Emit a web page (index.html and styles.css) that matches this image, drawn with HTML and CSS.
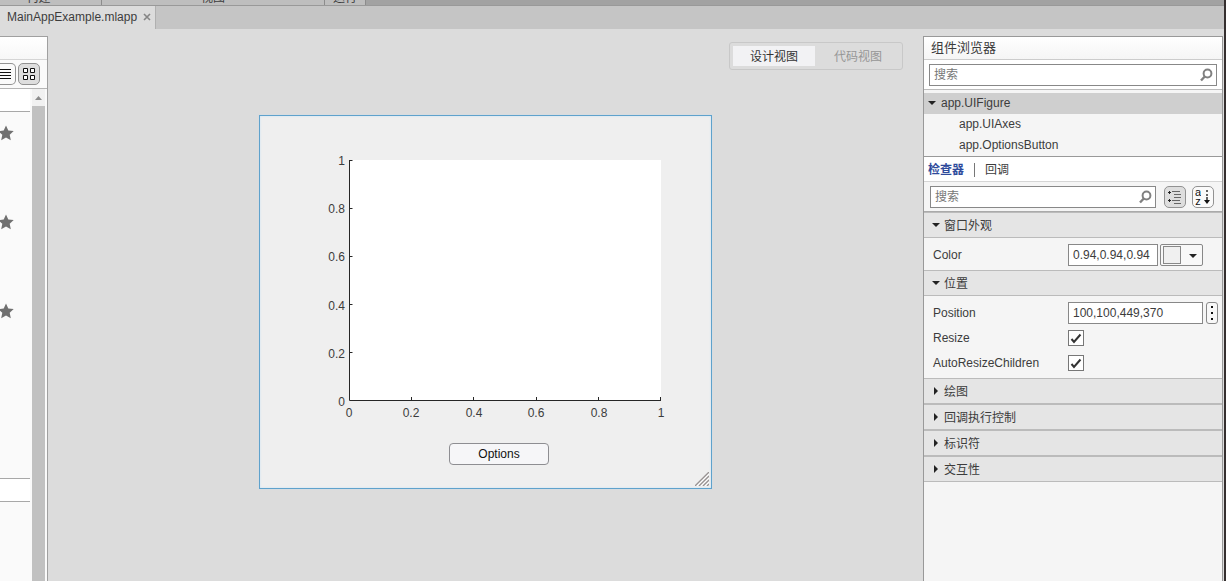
FILE: index.html
```html
<!DOCTYPE html>
<html lang="zh-CN">
<head>
<meta charset="utf-8">
<title>MainAppExample.mlapp</title>
<link rel="stylesheet" href="styles.css">
</head>
<body>
<div class="ribbon">
  <span class="group group-build">构建</span>
  <span class="group group-view">视图</span>
  <span class="group group-run">运行</span>
  <span class="ribbon-rest"></span>
</div>
<nav class="tabs">
  <div class="tab"><span>MainAppExample.mlapp</span>
    <button class="close" aria-label="关闭"><svg width="8" height="8" viewBox="0 0 8 8"><path d="M1 1l6 6M7 1L1 7" stroke="#858585" stroke-width="1.6"/></svg></button>
  </div>
</nav>
<main class="workspace">
  <aside class="library">
    <div class="library-head"></div>
    <div class="library-tools">
      <button class="tool tool-cut" aria-label="列表"><svg width="11" height="12" viewBox="0 0 11 12"><path d="M0 1.500h11M0 4.500h11M0 7.500h11M0 10.500h11" stroke="#111"/></svg></button>
      <button class="tool pressed" aria-label="网格"><svg width="12" height="12" viewBox="0 0 12 12"><path d="M.5.5h4v4h-4zM7.500.5h4v4h-4zM.5 7.500h4v4h-4zM7.500 7.500h4v4h-4z" fill="#fff" stroke="#111"/></svg></button>
    </div>
    <div class="library-body">
      <div class="library-list">
        <div class="category"></div>
        <div class="items">
          <svg class="star" viewBox="0 0 16 16"><path d="M8 .5l2.300 5 5.400.6-4 3.700 1.100 5.500L8 12.600l-4.800 2.700 1.100-5.500-4-3.700 5.400-.6z"/></svg>
          <svg class="star" viewBox="0 0 16 16"><path d="M8 .5l2.300 5 5.400.6-4 3.700 1.100 5.500L8 12.600l-4.800 2.700 1.100-5.500-4-3.700 5.400-.6z"/></svg>
          <svg class="star" viewBox="0 0 16 16"><path d="M8 .5l2.300 5 5.400.6-4 3.700 1.100 5.500L8 12.600l-4.800 2.700 1.100-5.500-4-3.700 5.400-.6z"/></svg>
        </div>
        <div class="category"></div>
      </div>
      <div class="scrollbar">
        <svg width="13" height="17" viewBox="0 0 13 17"><path d="M3 11l3.500-4 3.500 4z" fill="#8c8c8c"/></svg>
        <div class="thumb"></div>
      </div>
    </div>
  </aside>

  <section class="canvas">
    <div class="switch">
      <button class="view active">设计视图</button>
      <button class="view">代码视图</button>
    </div>
    <div class="figure">
      <svg class="axes" width="451" height="327" viewBox="0 0 451 327">
        <path d="M90 44h311v240H90z" fill="#fff"/>
        <path d="M89.500 44v240.500H401M89.500 44.500h3M89.500 92.500h3M89.500 140.500h3M89.500 188.500h3M89.500 236.500h3M151.500 284v-3M213.500 284v-3M276.500 284v-3M338.500 284v-3M400.500 284v-3" fill="none" stroke="#262626"/>
        <g text-anchor="end">
          <text x="85" y="49">1</text><text x="85" y="97">0.8</text><text x="85" y="145">0.6</text><text x="85" y="194">0.4</text><text x="85" y="242">0.2</text><text x="85" y="290">0</text>
        </g>
        <g text-anchor="middle">
          <text x="89" y="301">0</text><text x="151" y="301">0.2</text><text x="214" y="301">0.4</text><text x="276" y="301">0.6</text><text x="339" y="301">0.8</text><text x="401" y="301">1</text>
        </g>
      </svg>
      <button class="options">Options</button>
      <svg class="grip" width="14" height="14" viewBox="0 0 14 14"><path d="M0 14L14 0M4 14L14 4M8 14l6-6M12 14l2-2" stroke="#989292" stroke-width="1.300"/><path d="M2 14L14 2M6 14l8-8M10 14l4-4" stroke="#fff"/></svg>
    </div>
  </section>

  <aside class="inspector">
    <h2 class="title">组件浏览器</h2>
    <div class="search-row">
      <label class="search"><input type="text" placeholder="搜索" aria-label="搜索组件"><svg width="14" height="14" viewBox="0 0 14 14"><circle cx="8.500" cy="5.500" r="3.900" fill="none" stroke="#808080" stroke-width="2"/><path d="M5.800 8.500L2 12.500" stroke="#808080" stroke-width="2.400"/></svg></label>
    </div>
    <ul class="tree">
      <li class="node selected"><svg class="arrow" viewBox="0 0 8 8"><path d="M0 2h8L4 6z"/></svg>app.UIFigure</li>
      <li class="node child">app.UIAxes</li>
      <li class="node child">app.OptionsButton</li>
    </ul>
    <div class="inspector-tabs">
      <button class="itab current">检查器</button>
      <button class="itab">回调</button>
    </div>
    <div class="filter">
      <label class="search"><input type="text" placeholder="搜索" aria-label="搜索属性"><svg width="14" height="14" viewBox="0 0 14 14"><circle cx="8.500" cy="5.500" r="3.900" fill="none" stroke="#808080" stroke-width="2"/><path d="M5.800 8.500L2 12.500" stroke="#808080" stroke-width="2.400"/></svg></label>
      <button class="tool pressed" aria-label="按类别分组"><svg width="16" height="16" viewBox="0 0 16 16"><path d="M1 3.500h3M2.500 2v3M1 11.500h3M2.500 10v3" stroke="#222"/><path d="M5 2.500h8M7 5.500h7M7 8.500h7M5 11.500h8M7 14.500h7" stroke="#666"/></svg></button>
      <button class="tool sort" aria-label="按字母排序"><span class="az"><span>a</span><span>z</span></span><svg width="8" height="16" viewBox="0 0 8 16"><path d="M4 1v2M4 5v2M4 8v4" stroke="#222" stroke-width="1.400"/><path d="M1 11h6l-3 4z" fill="#111"/></svg></button>
    </div>

    <button class="section"><svg class="arrow" viewBox="0 0 8 8"><path d="M0 2h8L4 6z"/></svg><span>窗口外观</span></button>
    <div class="props">
      <div class="prop"><label for="color">Color</label>
        <input class="field color" id="color" type="text" value="0.94,0.94,0.94">
        <button class="swatch" aria-label="选择颜色"><span class="chip"></span><svg class="arrow" viewBox="0 0 8 8"><path d="M0 3h8L4 7z"/></svg></button>
      </div>
    </div>
    <button class="section"><svg class="arrow" viewBox="0 0 8 8"><path d="M0 2h8L4 6z"/></svg><span>位置</span></button>
    <div class="props">
      <div class="prop"><label for="position">Position</label>
        <input class="field position" id="position" type="text" value="100,100,449,370">
        <button class="more" aria-label="更多"><svg width="4" height="16" viewBox="0 0 4 16"><path d="M1 1h2v2H1zM1 7h2v2H1zM1 13h2v2H1z" fill="#111"/></svg></button>
      </div>
      <div class="prop"><label for="resize">Resize</label><span class="check"><input id="resize" type="checkbox" checked><svg viewBox="0 0 16 16"><path d="M3.500 9l2.500 3L12.500 4.500" fill="none" stroke="#333" stroke-width="2"/></svg></span></div>
      <div class="prop"><label for="auto">AutoResizeChildren</label><span class="check"><input id="auto" type="checkbox" checked><svg viewBox="0 0 16 16"><path d="M3.500 9l2.500 3L12.500 4.500" fill="none" stroke="#333" stroke-width="2"/></svg></span></div>
    </div>
    <button class="section"><svg class="arrow" viewBox="0 0 8 8"><path d="M2 0v8l4-4z"/></svg><span>绘图</span></button>
    <button class="section"><svg class="arrow" viewBox="0 0 8 8"><path d="M2 0v8l4-4z"/></svg><span>回调执行控制</span></button>
    <button class="section"><svg class="arrow" viewBox="0 0 8 8"><path d="M2 0v8l4-4z"/></svg><span>标识符</span></button>
    <button class="section"><svg class="arrow" viewBox="0 0 8 8"><path d="M2 0v8l4-4z"/></svg><span>交互性</span></button>
  </aside>
</main>
</body>
</html>
```
FILE: styles.css
```css
* { box-sizing: border-box; }
body {
  margin: 0;
  height: 100vh;
  display: flex;
  flex-direction: column;
  overflow: hidden;
  background: #dcdcdc;
  border-right: 2px solid #352f2f;
  color: #3c3c3c;
}
body, button, input { font-family: "Liberation Sans", "Noto Sans CJK SC", sans-serif; font-size: 12px; }
button { padding: 0; border: 0; background: none; color: inherit; }
svg { display: block; flex: none; }

.ribbon { flex: none; height: 6px; display: flex; align-items: flex-end; overflow: hidden; background: #bebebe; border-bottom: 1px solid #999; }
.group { flex: none; height: 16px; line-height: 18px; text-align: center; border-right: 1px solid #8c8c8c; }
.group-build { width: 102px; padding-right: 24px; }
.group-view { width: 223px; }
.group-run { width: 41px; }
.ribbon-rest { flex: 1; height: 5px; background: #a2a2a2; }

.tabs { flex: none; height: 23px; display: flex; background: #c5c5c5; }
.tab { display: flex; align-items: center; gap: 6px; padding: 0 4px 2px 7px; background: #dcdcdc; border-right: 1px solid #b0b0b0; }

.workspace { flex: 1; min-height: 0; display: flex; }

.library { width: 48px; margin-top: 7px; display: flex; flex-direction: column; background: #fafafa; border: 1px solid #a0a0a0; border-width: 1px 1px 0 0; }
.library-head { height: 23px; background: linear-gradient(#fff, #f7f7f7); border-bottom: 1px solid #d5d5d5; }
.library-tools { height: 29px; display: flex; align-items: center; gap: 2px; border-bottom: 1px solid #b5b5b5; }
.tool { width: 22px; height: 22px; display: flex; align-items: center; justify-content: center; background: #fafafa; border: 1px solid #929292; border-radius: 5px; }
.tool.pressed { background: #dedede; }
.tool-cut { width: 16px; border-left: 0; border-radius: 0 5px 5px 0; justify-content: flex-start; }
.library-body { flex: 1; display: flex; gap: 2px; }
.library-list { width: 30px; }
.category { height: 23px; background: #fff; border-bottom: 1px solid #a8a8a8; }
.items { height: 367px; display: flex; flex-direction: column; gap: 73px; padding-top: 13px; border-bottom: 1px solid #a8a8a8; }
.star { width: 16px; height: 16px; margin-left: -2px; fill: #707070; }
.scrollbar { width: 13px; display: flex; flex-direction: column; background: #f1f1f1; }
.thumb { flex: 1; background: #c1c1c1; }

.canvas { flex: 1; min-width: 0; display: flex; flex-direction: column; align-items: center; }
.switch { align-self: flex-end; display: flex; margin: 13px 20px 0 0; padding: 2px; border: 1px solid #c8c8c8; border-radius: 3px; }
.view { width: 84px; height: 22px; padding-bottom: 2px; border: 1px solid transparent; color: #969696; }
.view.active { background: #f2f2f4; background-clip: padding-box; color: #333; }
.figure { position: relative; margin-top: 45px; padding-bottom: 23px; background: #efefef; border: 1px solid #5fa2cc; box-shadow: 0 0 1px #bcdcf0, inset 0 0 2px #c0e0f8; }
.axes text { font-size: 12px; fill: #3c3c3c; }
.options { display: block; width: 100px; height: 22px; margin-left: 189px; color: #111; background: #f6f6f8; border: 1px solid #8e8e92; border-radius: 4px; }
.grip { position: absolute; right: 2px; bottom: 2px; }

.inspector { width: 300px; margin: 7px 1px 0 0; display: flex; flex-direction: column; background: #f5f5f5; border: 1px solid #999; border-width: 1px 1px 0; }
.title { flex: none; height: 23px; margin: 0; padding-left: 7px; font-size: 13px; line-height: 22px; font-weight: 400; background: linear-gradient(#fff, #f5f5f5); border-bottom: 1px solid #ccc; }
.search-row { padding: 4px 5px 3px; background: #fff; border-bottom: 1px solid #bbb; }
.search { flex: 1; height: 22px; display: flex; align-items: center; padding: 0 3px 0 4px; background: #fff; border: 1px solid #888; }
.search input { flex: 1; min-width: 0; padding: 0; border: 0; outline: 0; background: none; }
.search input::placeholder { color: #777; }
.tree { margin: 0; padding: 3px 0 0; list-style: none; border-bottom: 1px solid #999; }
.node { height: 21px; display: flex; align-items: center; gap: 5px; padding: 0 0 2px 4px; }
.node.selected { background: #cfcfcf; }
.node.child { padding-left: 35px; }
.arrow { width: 8px; height: 8px; fill: #222; }
.inspector-tabs { height: 25px; display: flex; align-items: center; padding: 2px 0 0 4px; background: #fff; border-bottom: 1px solid #d5d5d5; }
.itab { padding-right: 10px; line-height: 14px; }
.itab.current { font-weight: 700; color: #2f4b9c; border-right: 1px solid #777; }
.itab + .itab { padding-left: 10px; }
.filter { display: flex; padding: 4px 8px 3px 6px; border-bottom: 1px solid #aaa; }
.filter .tool { margin-left: 8px; }
.filter .tool + .tool { margin-left: 6px; }
.az { display: flex; flex-direction: column; font-family: "Liberation Sans", sans-serif; font-size: 11px; line-height: 9px; color: #111; }
.az span { height: 9px; overflow: hidden; line-height: 8px; }
.sort { gap: 2px; }
.section { flex: none; height: 26px; display: flex; align-items: center; gap: 4px; padding-left: 8px; text-align: left; background: #e5e5e5; border: 1px solid #bbb; border-width: 1px 0; }
.section span { padding-bottom: 2px; }
.props { padding: 4px 0 3px; }
.prop { height: 25px; display: flex; align-items: center; padding-left: 9px; }
.prop label { width: 135px; }
.field { height: 22px; padding: 0 4px; color: #3c3c3c; background: #fff; border: 1px solid #888; }
.color { width: 90px; }
.position { width: 135px; }
.swatch { width: 43px; height: 22px; margin-left: 2px; padding-left: 2px; display: flex; align-items: center; gap: 8px; background: #f8f8f8; border: 1px solid #888; border-radius: 2px; }
.chip { width: 18px; height: 18px; background: #f0f0f0; border: 1px solid #888; }
.more { width: 12px; height: 22px; margin-left: 3px; display: flex; align-items: center; justify-content: center; background: #f8f8f8; border: 1px solid #888; border-radius: 3px; }
.check { display: grid; width: 16px; height: 16px; }
.check input, .check svg { grid-area: 1 / 1; width: 16px; height: 16px; margin: 0; }
.check input { appearance: none; background: #fff; border: 1px solid #777; }
.check svg { visibility: hidden; pointer-events: none; z-index: 1; }
.check input:checked + svg { visibility: visible; }
```
